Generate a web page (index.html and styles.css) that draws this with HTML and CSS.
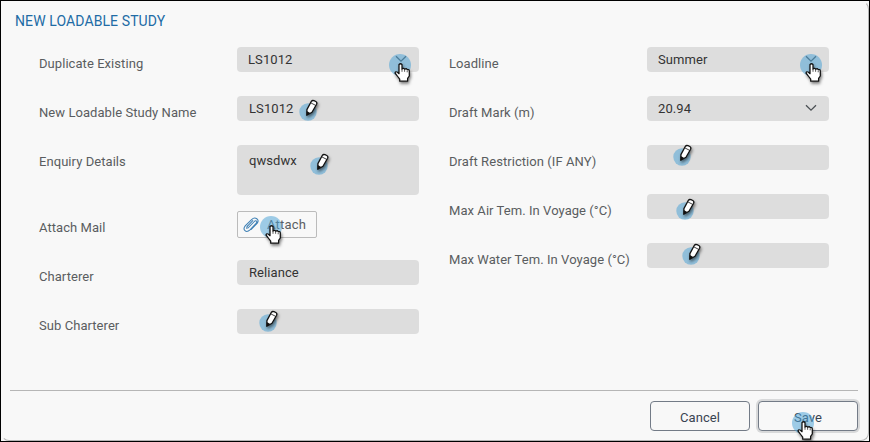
FILE: index.html
```
<!DOCTYPE html>
<html lang="en">
<head>
<meta charset="utf-8">
<title>New Loadable Study</title>
<link rel="stylesheet" href="styles.css">
</head>
<body>
<svg class="defs" width="0" height="0" aria-hidden="true">
  <defs>
    <symbol id="hand" viewBox="0 0 30 36">
      <circle cx="11" cy="11" r="11" fill="#4ca3d6" fill-opacity=".53"/>
      <g class="shadow"><path d="M10 10.5Q11.5 9 13 10.5V15L14.5 14.3 15.8 15.3 17.1 14.6 18.5 15.7Q20.3 15 20.3 17V22L18.6 24.3V27.2H10.7V25.2L8.7 22.5 6 19Q6.5 17 8.5 18.2L10 19.7Z" fill="#fff" stroke="#111" stroke-width="1.25" stroke-linejoin="round"/>
      <path d="M13 15V17.8M15.6 15.5V17.8M18.2 16.5V18.3" stroke="#111" stroke-width=".7"/></g>
    </symbol>
    <symbol id="pencil" viewBox="0 0 28 34">
      <circle cx="9" cy="14" r="8.7" fill="#4ca3d6" fill-opacity=".53"/>
      <g class="shadow"><path d="M7.8 17.2 7.9 11.6 12.4 3.3Q13.2 2.1 15 2.7L16.8 3.5Q18.4 4.4 17.6 6.2L13 14.2Z" fill="#fff" stroke="#111" stroke-width="1.3" stroke-linejoin="round"/>
      <path d="M11.7 4.8 16.7 7.4" stroke="#111" stroke-width=".8"/>
      <path d="M7.7 17.4 7.8 13 11.2 15Z" fill="#111"/></g>
    </symbol>
    <symbol id="chevron" viewBox="0 0 12 8"><path d="M1 1.2 6 6.2 11 1.2" fill="none" stroke="#4b5054" stroke-width="1.3"/></symbol>
  </defs>
</svg>
<main class="dialog">
  <h1>NEW LOADABLE STUDY</h1>
  <div class="form">
    <section class="column">
      <div class="row"><label>Duplicate Existing</label><div class="field select">LS1012<svg class="chevron"><use href="#chevron"/></svg><svg class="hand hand-select"><use href="#hand"/></svg></div></div>
      <div class="row"><label>New Loadable Study Name</label><div class="field">LS1012<svg class="pencil p-name"><use href="#pencil"/></svg></div></div>
      <div class="row tall"><label>Enquiry Details</label><div class="field area">qwsdwx<svg class="pencil p-enquiry"><use href="#pencil"/></svg></div></div>
      <div class="row"><label>Attach Mail</label><button class="attach"><svg class="clip" viewBox="0 0 16 16"><path d="M5 11 11.3 4.5Q12.7 3.1 13.5 4.1T12.9 6.6L7 12.8Q4.1 15.5 2 13.7T2.2 8.9L8.6 2.6Q11.3 0 13.8 1.8T14.1 6.4L8.2 12.5M3.8 11.4Q3.6 9.8 5 8.5L9.8 3.6" fill="none" stroke="#3f80b5" stroke-width="1.05" stroke-linecap="round"/></svg>Attach<svg class="hand hand-attach"><use href="#hand"/></svg></button></div>
      <div class="row"><label>Charterer</label><div class="field">Reliance</div></div>
      <div class="row"><label>Sub Charterer</label><div class="field"><svg class="pencil p-sub"><use href="#pencil"/></svg></div></div>
    </section>
    <section class="column">
      <div class="row"><label>Loadline</label><div class="field select">Summer<svg class="chevron"><use href="#chevron"/></svg><svg class="hand hand-load"><use href="#hand"/></svg></div></div>
      <div class="row"><label>Draft Mark (m)</label><div class="field select">20.94<svg class="chevron"><use href="#chevron"/></svg></div></div>
      <div class="row"><label>Draft Restriction (IF ANY)</label><div class="field"><svg class="pencil p-draft"><use href="#pencil"/></svg></div></div>
      <div class="row"><label>Max Air Tem. In Voyage (°C)</label><div class="field"><svg class="pencil p-air"><use href="#pencil"/></svg></div></div>
      <div class="row"><label>Max Water Tem. In Voyage (°C)</label><div class="field"><svg class="pencil p-water"><use href="#pencil"/></svg></div></div>
    </section>
  </div>
  <footer><button class="action">Cancel</button><button class="action save">Save<svg class="hand hand-save"><use href="#hand"/></svg></button></footer>
</main>
</body>
</html>
```
FILE: styles.css
```
* { box-sizing: border-box; }
body { margin: 0; width: 870px; height: 442px; overflow: hidden; background: #f8f8f8; border: 1px solid #000; font: 13px/16px Roboto, "Liberation Sans", sans-serif; color: #333; }
.defs { position: absolute; }
.dialog { width: 868px; height: 440px; padding: 12px 10px 0 8px; border: 1px solid #b4b4b4; border-left-color: #f8f8f8; border-top-color: #f8f8f8; border-radius: 8px; display: flex; flex-direction: column; }
h1 { margin: 0 0 0 5px; height: 33px; font-size: 14px; line-height: 15px; font-weight: 400; color: #216ba5; letter-spacing: .1px; }
.form { display: flex; gap: 30px; height: 343px; padding-left: 29px; }
.column { width: 380px; }
.row { display: flex; height: 49px; }
.row.tall { height: 66px; }
label { width: 198px; padding-top: 9px; color: #5a5d60; letter-spacing: .06px; white-space: nowrap; }
.field { position: relative; width: 182px; height: 25px; padding: 5px 12px; background: #ddd; border-radius: 4px; letter-spacing: .08px; }
.field.select { padding-left: 11px; }
.field.area { height: 50px; padding-top: 8px; }
.chevron { position: absolute; right: 12px; top: 8px; width: 12px; height: 8px; }
button { position: relative; margin: 0; border: 1px solid #737b87; border-radius: 4px; background: #f8f8f8; font: inherit; color: #394452; letter-spacing: .1px; }
.attach { display: flex; align-items: center; width: 80px; height: 27px; padding: 0 0 0 5px; gap: 8px; border-color: #bbb; border-radius: 2px; color: #5b5e62; letter-spacing: .2px; }
.clip { width: 16px; height: 16px; flex: none; }
footer { display: flex; justify-content: flex-end; gap: 8px; height: 50px; padding-top: 10px; border-top: 1px solid #b6b6b6; }
.action { width: 100px; height: 30px; padding: 3px 0 0; }
.save { box-shadow: 0 0 0 2px #d8d9da; }
.hand, .pencil { position: absolute; overflow: visible; }
.hand { width: 30px; height: 36px; }
.pencil { width: 28px; height: 34px; }
.shadow { filter: drop-shadow(1px 2px 1.5px rgba(0, 0, 0, .5)); }
.hand-select { left: 152px; top: 7px; }
.hand-load { left: 153px; top: 7px; }
.hand-attach { left: 22px; top: 4px; }
.hand-save { left: 33px; top: 10px; }
.p-name { left: 62px; top: 2px; }
.p-enquiry { left: 73px; top: 7px; }
.p-sub { left: 22px; top: 0; }
.p-draft { left: 26px; top: -2px; }
.p-air { left: 29px; top: 3px; }
.p-water { left: 35px; top: -1px; }
```
